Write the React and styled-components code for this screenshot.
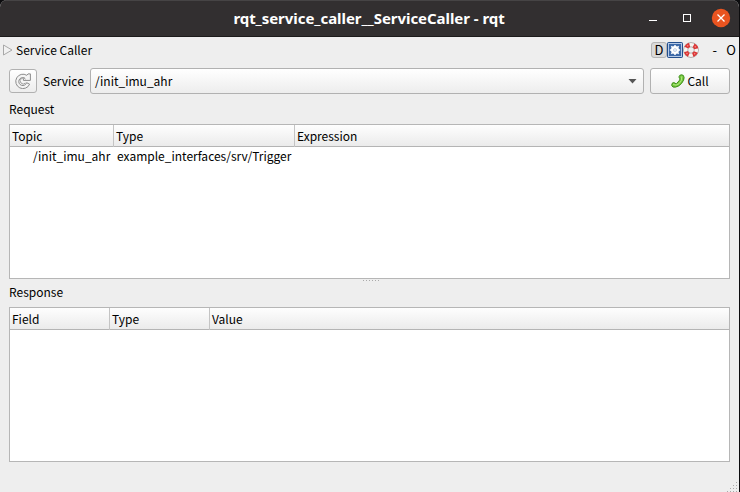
import React from "react";
import styled, { createGlobalStyle } from "styled-components";

const GlobalStyle = createGlobalStyle`
  * { box-sizing: border-box; }
  body { margin: 0; background: #0c0c0e; overflow: hidden; }
`;

const Window = styled.div`
  width: 739px;
  height: 492px;
  display: flex;
  flex-direction: column;
  position: relative;
  background: #eeeeee;
  border-radius: 7px 7px 0 0;
  overflow: hidden;
  color: #000;
  font: 12px/20px "Noto Sans CJK SC", "Noto Sans", sans-serif;
  white-space: pre;
`;

const TitleBar = styled.header`
  height: 37px;
  flex: none;
  display: grid;
  grid-template-columns: 1fr auto 1fr;
  align-items: center;
  padding-bottom: 1px;
  background: #322f30;
  border-top: 1px solid #464445;
  border-bottom: 1px solid #1c1b1b;
`;

const Title = styled.h1`
  grid-column: 2;
  margin: 0 1px 0 0;
  color: #fff;
  font: bold 15px/20px "Noto Sans", sans-serif;
  letter-spacing: ${(p) => p.$tracking}px;
`;

const WindowControls = styled.div`
  display: flex;
  justify-content: flex-end;
  padding-right: 8px;
  svg { display: block; }
`;

const DockBar = styled.div`
  height: 26px;
  flex: none;
  display: flex;
  align-items: center;
  padding: 0 3px;
`;

const DockTitle = styled.span`
  margin-left: 3px;
  flex: 1;
`;

const DockButton = styled.button`
  width: 16px;
  height: 16px;
  padding: 0;
  display: flex;
  align-items: center;
  justify-content: center;
  border: ${(p) => (p.$framed ? "1px solid #b4b4b4" : "0")};
  border-radius: 3px;
  background: ${(p) => (p.$framed ? "#dadada" : "none")};
  font: inherit;
  font-size: 13px;
  color: #000;
`;

const DockGlyph = styled.span`
  width: ${(p) => p.$width}px;
  font-size: 13px;
  text-align: right;
`;

const Toolbar = styled.div`
  height: 36px;
  flex: none;
  display: flex;
  align-items: center;
  padding: 0 9px;
`;

const Button = styled.button`
  width: ${(p) => p.$width}px;
  height: ${(p) => p.$height}px;
  padding: 0;
  display: flex;
  align-items: center;
  justify-content: center;
  gap: 2px;
  border: 1px solid #b1b1b1;
  border-radius: 3px;
  background: linear-gradient(#ffffff, #ededed);
  font: inherit;
  color: #000;
`;

const FieldLabel = styled.label`
  width: 53px;
  padding-left: 6px;
`;

const ComboBox = styled.div`
  width: 554px;
  height: 26px;
  margin-right: 6px;
  padding: 0 6px 0 4px;
  display: flex;
  align-items: center;
  justify-content: space-between;
  border: 1px solid #b1b1b1;
  border-radius: 3px;
  background: linear-gradient(#ffffff, #ededed);
`;

const SectionLabel = styled.div`
  height: 25px;
  flex: none;
  padding: 0 9px;
`;

const Table = styled.section`
  width: 721px;
  height: 155px;
  flex: none;
  margin-left: 9px;
  border: 1px solid #b6b6b6;
  background: #fff;
`;

const Row = styled.div`
  display: grid;
  grid-template-columns: ${(p) => p.$columns};
`;

const HeaderRow = styled(Row)`
  height: 22px;
  border-bottom: 1px solid #b4b4b4;
  background: linear-gradient(#fefefe, #ebebeb);
`;

const HeaderCell = styled.span`
  padding-left: 2px;
  line-height: 22px;
  border-right: 1px solid #c4c4c4;
  &:last-child { border-right: 0; }
`;

const Cell = styled.span`
  padding-left: ${(p) => p.$indent}px;
  line-height: 18px;
`;

const Splitter = styled.div`
  height: 3px;
  flex: none;
  padding: 1px 0 0 363px;
  display: flex;
  gap: 2px;
`;

const Dot = styled.i`
  width: 1px;
  height: 1px;
  background: #aaa;
`;

const SizeGrip = styled.svg`
  position: absolute;
  right: 0;
  bottom: 0;
`;

function DataTable({ columns, headers, children }) {
  return (
    <Table>
      <HeaderRow $columns={columns}>
        {headers.map((h) => <HeaderCell key={h}>{h}</HeaderCell>)}
      </HeaderRow>
      {children}
    </Table>
  );
}

const requestColumns = "104px 181px 1fr";

const GearIcon = () => (
  <svg width="16" height="16" viewBox="0 0 16 16">
    <rect x=".5" y=".5" width="15" height="15" rx="1" fill="#3c69a8" stroke="#234f8d" />
    <rect x="1.5" y="1.5" width="13" height="13" fill="none" stroke="#b4c9e6" />
    <circle cx="8" cy="8" r="2.8" fill="none" stroke="#fff" strokeWidth="2.4" />
    <path d="M8 2.9v2M8 11.1v2M2.9 8h2M11.1 8h2M4.3 4.3l1.5 1.5M10.2 10.2l1.5 1.5M11.7 4.3l-1.5 1.5M5.8 10.2l-1.5 1.5" stroke="#fff" strokeWidth="1.5" />
    <circle cx="8" cy="8" r="1.7" fill="#dfe8f4" />
  </svg>
);

const LifebuoyIcon = () => (
  <svg width="16" height="16" viewBox="0 0 16 16">
    <circle cx="8" cy="8" r="5.3" fill="none" stroke="#a09c9a" strokeWidth="5" />
    <circle cx="8" cy="8" r="5.3" fill="none" stroke="#f7f3f0" strokeWidth="3.6" />
    <circle cx="8" cy="8" r="5.3" fill="none" stroke="#dc3434" strokeWidth="4.2" strokeDasharray="4.16 4.165" strokeDashoffset="-2.08" />
    <circle cx="8" cy="8" r="5.3" fill="none" stroke="#ee8a84" strokeWidth="1.4" strokeDasharray="1.3 7.025" strokeDashoffset="-3.51" />
  </svg>
);

const RefreshIcon = () => (
  <svg width="16" height="16" viewBox="0 0 16 16" fill="none">
    <path d="M14.6 11.2A7.2 7.2 0 1 1 11.8 2.3L13 .9H15.4V7.4H8.4V5.8L9.4 4.9A4 4 0 1 0 11.6 9.7Z" fill="#f4f4f4" stroke="#8c8c8c" />
    <path d="M10.7 6.3A3 3 0 1 0 10.4 10" stroke="#a0a0a0" />
  </svg>
);

const PhoneIcon = () => (
  <svg width="14" height="14" viewBox="0 0 14 14">
    <path d="M1 9.5Q2 8 4 9L5 9.9Q5.6 9.6 6 9Q8.6 6.8 9.1 4.9L8.2 3.9Q7.7 2.4 8.8 1.3Q10.6 .2 12.3 1.4Q13.7 3 12.6 6.2Q10.9 9.9 7.7 11.9Q4.2 13.8 2 13Q.1 12.2 1 9.5Z" fill="#75c83c" stroke="#3e8e1c" />
    <path d="M2.2 10.5Q5 12.1 8 9.8Q11.2 7 10.8 2.4" fill="none" stroke="#b2e984" />
  </svg>
);

export default function App() {
  return (
    <>
      <GlobalStyle />
      <Window>
        <TitleBar>
          <Title $tracking={-0.05}>rqt_service_caller__ServiceCaller - rqt</Title>
          <WindowControls>
            <svg width="84" height="20" viewBox="0 0 84 20" fill="none">
              <path d="M2 12.5h8" stroke="#fff" />
              <rect x="36.5" y="6.5" width="7" height="7" stroke="#fff" />
              <circle cx="74" cy="10" r="9.2" fill="#e95420" />
              <path d="M70.5 6.5l7 7M77.5 6.5l-7 7" stroke="#fff" strokeWidth="1.3" />
            </svg>
          </WindowControls>
        </TitleBar>
        <DockBar>
          <svg width="10" height="12" viewBox="0 0 10 12">
            <path d="M.5 1v10L9 6Z" fill="#f1f1f1" stroke="#a8a8a8" />
          </svg>
          <DockTitle>Service Caller</DockTitle>
          <DockButton $framed>D</DockButton>
          <DockButton><GearIcon /></DockButton>
          <DockButton><LifebuoyIcon /></DockButton>
          <DockGlyph $width={18}>-</DockGlyph>
          <DockGlyph $width={19}>O</DockGlyph>
        </DockBar>
        <Toolbar>
          <Button $width={28} $height={24} aria-label="Refresh"><RefreshIcon /></Button>
          <FieldLabel>Service</FieldLabel>
          <ComboBox>
            <span>/init_imu_ahr</span>
            <svg width="9" height="5" viewBox="0 0 9 5"><path d="M.5 0h8l-4 4.5Z" fill="#555" /></svg>
          </ComboBox>
          <Button $width={80} $height={26}><PhoneIcon />Call</Button>
        </Toolbar>
        <SectionLabel>Request</SectionLabel>
        <DataTable columns={requestColumns} headers={["Topic", "Type", "Expression"]}>
          <Row $columns={requestColumns}>
            <Cell $indent={23}>/init_imu_ahr</Cell>
            <Cell $indent={3}>example_interfaces/srv/Trigger</Cell>
          </Row>
        </DataTable>
        <Splitter>{[0, 1, 2, 3, 4, 5].map((n) => <Dot key={n} />)}</Splitter>
        <SectionLabel>Response</SectionLabel>
        <DataTable columns="100px 100px 1fr" headers={["Field", "Type", "Value"]} />
        <SizeGrip width="13" height="12" viewBox="0 0 13 12" fill="#aaa">
          <path d="M10 2h1v1h-1zM7 5h1v1h-1zM10 5h1v1h-1zM4 8h1v1h-1zM7 8h1v1h-1zM10 8h1v1h-1zM1 11h1v1h-1zM4 11h1v1h-1zM7 11h1v1h-1zM10 11h1v1h-1z" />
        </SizeGrip>
      </Window>
    </>
  );
}
